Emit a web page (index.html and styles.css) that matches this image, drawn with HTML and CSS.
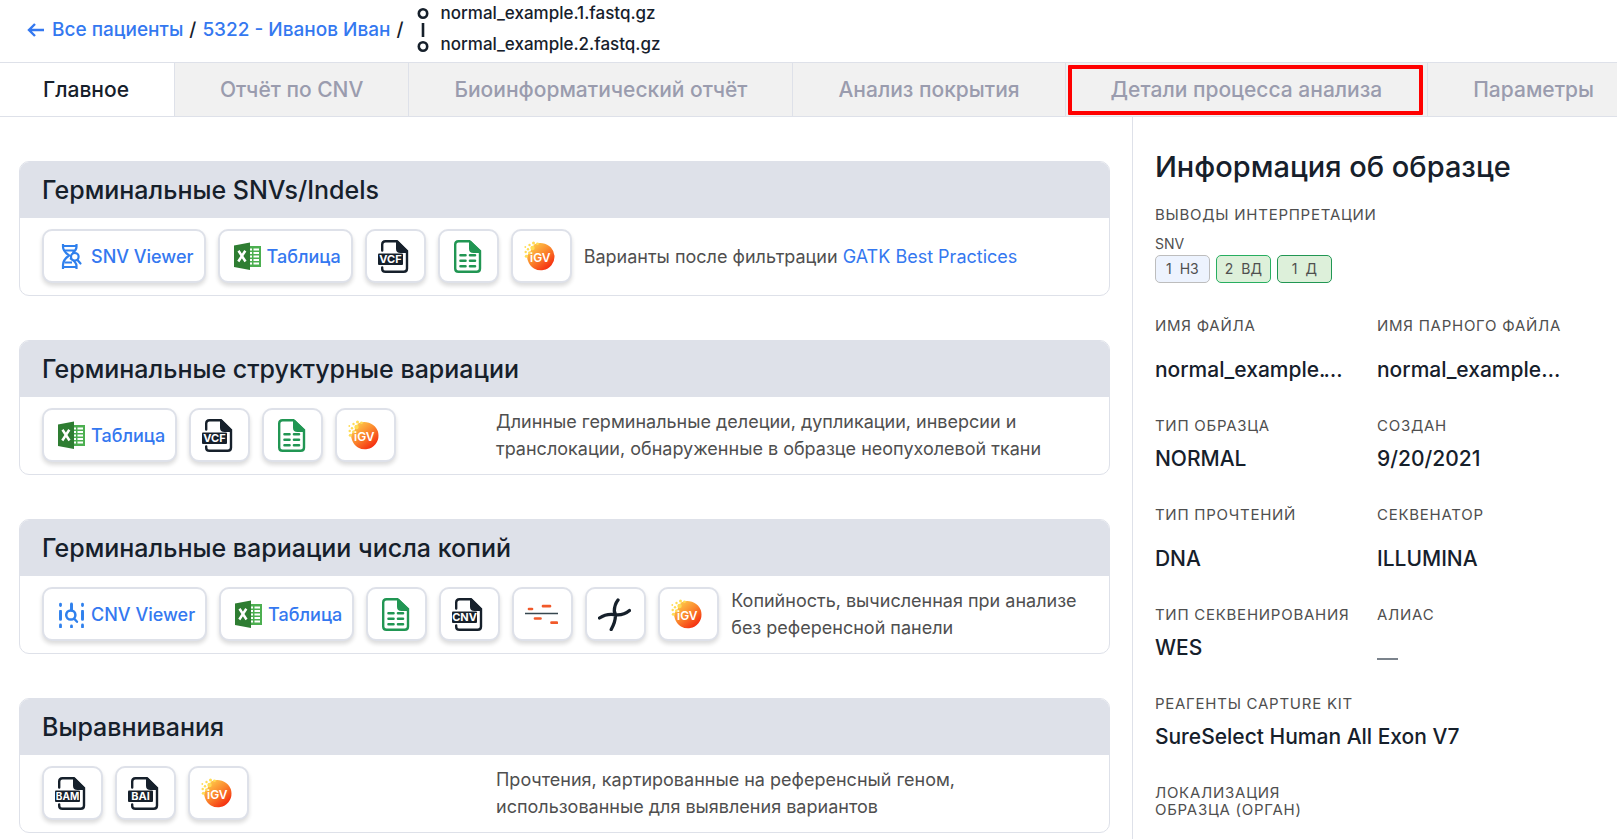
FILE: index.html
```html
<!DOCTYPE html>
<html lang="ru">
<head>
<meta charset="utf-8">
<meta name="viewport" content="width=device-width, initial-scale=1">
<title>Информация об образце</title>
<link rel="stylesheet" href="styles.css">
</head>
<body>
<svg class="sprite" aria-hidden="true">
  <defs>
    <linearGradient id="igv-fill" x1="0" y1="0" x2="0.8" y2="1">
      <stop offset="0" stop-color="#ffdf55"/>
      <stop offset="0.5" stop-color="#fb8a2e"/>
      <stop offset="1" stop-color="#f4220c"/>
    </linearGradient>
    <symbol id="i-doc" viewBox="0 0 33 33">
      <path d="M4.2 10.5V4.5Q4.2 1.2 7.5 1.2H19L29 11V28.5Q29 31.8 25.7 31.8H7.5Q4.2 31.8 4.2 29V27.5" fill="none" stroke="#16202b" stroke-width="2.4" stroke-linecap="round"/>
      <path d="M18 1H20L29.5 10.500V13H22.500Q18 13 18 9Z" fill="#16202b"/>
      <rect x="0" y="13.500" width="25" height="11.500" rx="1" fill="#16202b"/>
    </symbol>
    <symbol id="i-sheet" viewBox="0 0 33 33">
      <path d="M18.500 1.200H7.500Q4.200 1.200 4.200 4.500V28.500Q4.200 31.800 7.500 31.800H25.700Q29 31.800 29 28.500V11Z" fill="none" stroke="#219653" stroke-width="2.400"/>
      <path d="M18 1H20L30 11V13H22.500Q18 13 18 9Z" fill="#219653"/>
      <path d="M9.500 15.300H14.500M19 15.300H24M9.500 20.800H14.500M19 20.800H24M9.500 26.200H14.500M19 26.200H24" stroke="#219653" stroke-width="2.600" stroke-linecap="round"/>
    </symbol>
    <symbol id="i-igv" viewBox="0 0 33 33">
      <path d="M10 4.500Q14 2.600 18.500 3.200A13.600 13.600 0 1 1 4 21Q2.800 18 3.200 15.500L6 12Z" fill="url(#igv-fill)"/>
      <g fill="#ffdc55">
        <circle cx="5.500" cy="5" r="1.200"/><circle cx="9.500" cy="3" r="1.500"/><circle cx="1.300" cy="7" r="0.900"/>
        <circle cx="8.500" cy="8" r="2.200"/><circle cx="4" cy="9.300" r="1.200"/><circle cx="13.500" cy="3.800" r="1.300"/>
        <circle cx="5.500" cy="12.800" r="1.500"/><circle cx="1.700" cy="12" r="1.200"/><circle cx="2.300" cy="16.200" r="1.500"/>
      </g>
      <text class="igv-word" x="6" y="21.500">iGV</text>
    </symbol>
    <symbol id="i-excel" viewBox="0 0 28 28">
      <rect x="14" y="4" width="13" height="21" fill="#4caf50"/>
      <path d="M14 7.500H18M19.500 7.500H25M14 11H18M19.500 11H25M14 14.500H18M19.500 14.500H25M14 18H18M19.500 18H25M14 21.500H18M19.500 21.500H25" stroke="#fff" stroke-width="1.900"/>
      <path d="M0 3.500L16 0.500V28L0 25Z" fill="#2e7d32"/>
      <path d="M4.500 8.800L11.500 19.500M11.300 8.800L4.300 19.500" stroke="#fff" stroke-width="2.500"/>
    </symbol>
    <symbol id="i-snv" viewBox="0 0 28 28">
      <g fill="none" stroke="#2f80ed" stroke-width="2.200">
        <path d="M5 2V5Q5 9 11 13.500Q5 18 5 23V27M18.500 2V5Q18.500 8 14.500 11M12 16Q18.500 20 18.500 24V27"/>
        <path d="M5 4H18.500M6.500 8.500H17M6.500 20.500H14M5 25H18.500"/>
        <circle cx="16.800" cy="14.800" r="3.800" fill="#fff"/>
        <path d="M19.500 18L22.500 21.500" stroke-linecap="round"/>
      </g>
    </symbol>
    <symbol id="i-cnv" viewBox="0 0 28 28">
      <g fill="none" stroke="#2f80ed" stroke-width="2.800" stroke-linecap="round">
        <path d="M2.500 4.200V5.500M2.500 12V19M2.500 25V27M24.500 4.200V5.500M24.500 12V19M24.500 25V27M13.500 4V10M13.500 26V27" />
        <path d="M2.500 10V20.500M24.500 10V20.500M13.500 4V10" stroke-width="2.400" stroke-linecap="butt"/>
        <circle cx="12.800" cy="15" r="4.600" stroke-width="2.500"/>
        <path d="M16.500 19L19 21.800" stroke-width="2.400"/>
      </g>
    </symbol>
    <symbol id="i-segments" viewBox="0 0 33 33">
      <path d="M0 15.500H33" stroke="#37474f" stroke-width="1.400"/>
      <path d="M4 11H7M18 8.200H25M10 20.500H15.500M26.500 24.700H32" stroke="#f1592a" stroke-width="2.700" stroke-linecap="round"/>
    </symbol>
    <symbol id="i-chromosome" viewBox="0 0 33 33">
      <path d="M20 2Q16.500 6.500 16.300 13Q19.500 20 13.200 31.500M1.500 20Q8 15.500 16 16.500Q25 18 31.500 12.500M16.300 13L17.500 18" fill="none" stroke="#16202b" stroke-width="3.300" stroke-linecap="round" stroke-linejoin="round"/>
    </symbol>
  </defs>
</svg>

<header class="topbar">
  <nav class="crumbs" aria-label="Навигация">
    <a class="crumb-link back" href="#">
      <svg class="arrow" viewBox="0 0 18 16" aria-hidden="true"><path d="M8 2L2 8L8 14M2.500 8H17" fill="none" stroke="currentColor" stroke-width="2.400"/></svg>
      Все пациенты</a>
    <span>/</span>
    <a class="crumb-link" href="#">5322 - Иванов Иван</a>
    <span>/</span>
  </nav>
  <div class="pair">
    <svg class="pair-mark" viewBox="0 0 12 44" aria-hidden="true"><g fill="none" stroke="#16202b" stroke-width="2.600"><ellipse cx="6" cy="5.500" rx="4.200" ry="4.200"/><path d="M6 15V29"/><ellipse cx="6" cy="38.500" rx="4.200" ry="4.200"/></g></svg>
    <div class="pair-names"><span>normal_example.1.fastq.gz</span><span>normal_example.2.fastq.gz</span></div>
  </div>
</header>

<nav class="tabs" aria-label="Разделы">
  <a class="tab tab-active" href="#">Главное</a>
  <a class="tab" href="#">Отчёт по CNV</a>
  <a class="tab" href="#">Биоинформатический отчёт</a>
  <a class="tab" href="#">Анализ покрытия</a>
  <a class="tab tab-marked" href="#">Детали процесса анализа</a>
  <a class="tab" href="#">Параметры</a>
</nav>

<div class="layout">
  <main class="cards">
    <section class="card">
      <h2 class="card-title">Герминальные SNVs/Indels</h2>
      <div class="card-body">
        <div class="actions">
          <button class="btn"><svg class="icon-s" aria-hidden="true"><use href="#i-snv"/></svg>SNV Viewer</button>
          <button class="btn"><svg class="icon-s" aria-hidden="true"><use href="#i-excel"/></svg>Таблица</button>
          <button class="btn btn-icon" aria-label="VCF"><svg class="icon-l" viewBox="0 0 33 33"><use href="#i-doc"/><text class="doc-word" x="12.500" y="23">VCF</text></svg></button>
          <button class="btn btn-icon" aria-label="Google Sheets"><svg class="icon-l"><use href="#i-sheet"/></svg></button>
          <button class="btn btn-icon" aria-label="IGV"><svg class="icon-l"><use href="#i-igv"/></svg></button>
        </div>
        <p class="note">Варианты после фильтрации <a class="note-link" href="#">GATK Best Practices</a></p>
      </div>
    </section>

    <section class="card">
      <h2 class="card-title">Герминальные структурные вариации</h2>
      <div class="card-body">
        <div class="actions">
          <button class="btn"><svg class="icon-s" aria-hidden="true"><use href="#i-excel"/></svg>Таблица</button>
          <button class="btn btn-icon" aria-label="VCF"><svg class="icon-l" viewBox="0 0 33 33"><use href="#i-doc"/><text class="doc-word" x="12.500" y="23">VCF</text></svg></button>
          <button class="btn btn-icon" aria-label="Google Sheets"><svg class="icon-l"><use href="#i-sheet"/></svg></button>
          <button class="btn btn-icon" aria-label="IGV"><svg class="icon-l"><use href="#i-igv"/></svg></button>
        </div>
        <p class="note">Длинные герминальные делеции, дупликации, инверсии и транслокации, обнаруженные в образце неопухолевой ткани</p>
      </div>
    </section>

    <section class="card">
      <h2 class="card-title">Герминальные вариации числа копий</h2>
      <div class="card-body">
        <div class="actions">
          <button class="btn"><svg class="icon-s" aria-hidden="true"><use href="#i-cnv"/></svg>CNV Viewer</button>
          <button class="btn"><svg class="icon-s" aria-hidden="true"><use href="#i-excel"/></svg>Таблица</button>
          <button class="btn btn-icon" aria-label="Google Sheets"><svg class="icon-l"><use href="#i-sheet"/></svg></button>
          <button class="btn btn-icon" aria-label="CNV"><svg class="icon-l" viewBox="0 0 33 33"><use href="#i-doc"/><text class="doc-word" x="12.500" y="23">CNV</text></svg></button>
          <button class="btn btn-icon" aria-label="Сегменты"><svg class="icon-l"><use href="#i-segments"/></svg></button>
          <button class="btn btn-icon" aria-label="Хромосомы"><svg class="icon-l"><use href="#i-chromosome"/></svg></button>
          <button class="btn btn-icon" aria-label="IGV"><svg class="icon-l"><use href="#i-igv"/></svg></button>
        </div>
        <p class="note">Копийность, вычисленная при анализе без референсной панели</p>
      </div>
    </section>

    <section class="card">
      <h2 class="card-title">Выравнивания</h2>
      <div class="card-body">
        <div class="actions">
          <button class="btn btn-icon" aria-label="BAM"><svg class="icon-l" viewBox="0 0 33 33"><use href="#i-doc"/><text class="doc-word doc-word-wide" x="12.500" y="22.800">BAM</text></svg></button>
          <button class="btn btn-icon" aria-label="BAI"><svg class="icon-l" viewBox="0 0 33 33"><use href="#i-doc"/><text class="doc-word" x="12.500" y="23">BAI</text></svg></button>
          <button class="btn btn-icon" aria-label="IGV"><svg class="icon-l"><use href="#i-igv"/></svg></button>
        </div>
        <p class="note">Прочтения, картированные на референсный геном, использованные для выявления вариантов</p>
      </div>
    </section>
  </main>

  <aside class="info">
    <h1 class="info-title">Информация об образце</h1>
    <div class="label">Выводы интерпретации</div>
    <div class="kind">SNV</div>
    <div class="badges">
      <span class="badge badge-neutral"><span>1</span><span>НЗ</span></span>
      <span class="badge badge-likely"><span>2</span><span>ВД</span></span>
      <span class="badge badge-benign"><span>1</span><span>Д</span></span>
    </div>
    <dl class="facts">
      <div class="fact fact-tall"><dt class="label">Имя файла</dt><dd class="value">normal_example.1.fastq.gz</dd></div>
      <div class="fact fact-tall"><dt class="label">Имя парного файла</dt><dd class="value value-short">normal_example.2.fastq.gz</dd></div>
      <div class="fact"><dt class="label">Тип образца</dt><dd class="value">NORMAL</dd></div>
      <div class="fact"><dt class="label">Создан</dt><dd class="value">9/20/2021</dd></div>
      <div class="fact fact-tall"><dt class="label">Тип прочтений</dt><dd class="value">DNA</dd></div>
      <div class="fact fact-tall"><dt class="label">Секвенатор</dt><dd class="value">ILLUMINA</dd></div>
      <div class="fact"><dt class="label">Тип секвенирования</dt><dd class="value">WES</dd></div>
      <div class="fact"><dt class="label">Алиас</dt><dd class="value"><span class="blank"></span></dd></div>
      <div class="fact fact-wide"><dt class="label">Реагенты capture kit</dt><dd class="value">SureSelect Human All Exon V7</dd></div>
      <div class="fact"><dt class="label">Локализация образца (орган)</dt></div>
    </dl>
  </aside>
</div>
</body>
</html>
```
FILE: styles.css
```css
* { box-sizing: border-box; }

html, body { height: 100%; }

body {
  margin: 0;
  display: flex;
  flex-direction: column;
  overflow: hidden;
  background: #fff;
  color: #16202b;
  font-family: Inter, "Liberation Sans", sans-serif;
  font-size: 18px;
  line-height: 27px;
}

.sprite { position: absolute; width: 0; height: 0; }

a { text-decoration: none; color: inherit; }

.topbar {
  flex: none;
  display: flex;
  align-items: center;
  gap: 13px;
  height: 62px;
  padding: 0 27px 3px;
}

.crumbs {
  display: flex;
  align-items: center;
  gap: 6px;
  font-size: 19px;
  font-weight: 550;
}

.crumb-link { color: #3478f0; }
.back { display: flex; align-items: center; gap: 7px; }
.arrow { width: 18px; height: 16px; }

.pair { display: flex; align-items: center; gap: 12px; }
.pair-mark { width: 12px; height: 44px; }

.pair-names {
  display: flex;
  flex-direction: column;
  gap: 4px;
  padding-bottom: 2px;
  font-size: 17px;
  font-weight: 500;
}

.tabs {
  flex: none;
  display: flex;
  overflow: hidden;
  border-top: 1px solid #dee1e9;
  border-bottom: 1px solid #dee1e9;
  background: #f1f1f1;
}

.tab {
  flex: none;
  position: relative;
  padding: 13px 45px;
  border-right: 1px solid #dee1e9;
  color: #9a9cae;
  font-size: 21px;
  font-weight: 550;
}

.tab-active {
  padding-left: 43px;
  background: #fff;
  color: #16202b;
}

.tab-marked::after {
  content: "";
  position: absolute;
  inset: 2px 4px 1px 2px;
  border: 4px solid #f00;
  border-radius: 1px;
}

.layout { flex: 1; display: flex; min-height: 0; }

.cards {
  flex: 1;
  display: flex;
  flex-direction: column;
  gap: 44px;
  min-width: 0;
  padding: 44px 22px 0 19px;
}

.card {
  border: 1px solid #dee1e9;
  border-radius: 10px;
  overflow: hidden;
  flex: none;
}

.card-title {
  margin: 0;
  padding: 12px 22px;
  background: #dee1e9;
  font-size: 25px;
  line-height: 32px;
  font-weight: 550;
}

.card-body {
  display: flex;
  align-items: center;
  gap: 12px;
  padding: 11px 22px 12px;
}

.actions { display: flex; gap: 12px; flex: none; min-width: 42.3%; }

.btn {
  display: flex;
  align-items: center;
  gap: 5px;
  height: 54px;
  padding: 0 10px 0 14px;
  border: 2px solid #dee1e9;
  border-radius: 10px;
  background: #fff;
  box-shadow: 0 3px 4px rgba(0, 0, 0, 0.14);
  color: #3478f0;
  font: 500 18px/27px Inter, "Liberation Sans", sans-serif;
}

.btn-icon { padding: 0 13px 0 11px; }
.icon-s { width: 28px; height: 28px; }
.icon-l { width: 33px; height: 33px; }

.doc-word {
  fill: #fff;
  font: 700 11px Inter, sans-serif;
  text-anchor: middle;
}

.doc-word-wide { font-size: 10px; }

.igv-word { fill: #fff; font: 600 12px Inter, sans-serif; }

.note { margin: 0; color: #4f4f4f; }
.note-link { color: #3478f0; }

.info {
  flex: none;
  width: 30%;
  padding: 32px 18px 0 22px;
  border-left: 1px solid #dee1e9;
}

.info-title {
  margin: 0 0 21px;
  font-size: 29px;
  line-height: 36px;
  font-weight: 550;
}

.label {
  color: #4f4f4f;
  font-size: 15px;
  line-height: 17px;
  letter-spacing: 0.05em;
  text-transform: uppercase;
}

.kind {
  margin-top: 9px;
  color: #4f4f4f;
  font-size: 14px;
  line-height: 23px;
}

.badges { display: flex; gap: 6px; }

.badge {
  display: flex;
  justify-content: center;
  gap: 8px;
  width: 55px;
  height: 28px;
  border: 1px solid;
  border-radius: 5px;
  color: #4f4f4f;
  font-size: 14px;
  line-height: 25px;
}

.badge-neutral { background: #edf3fe; border-color: #bdbdbd; }
.badge-likely { background: #ddf0da; border-color: #27ae60; }
.badge-benign { background: #ddf0da; border-color: #219653; }

.facts {
  display: grid;
  grid-template-columns: 1fr 1fr;
  row-gap: 33px;
  margin: 34px 0 0;
}

.fact { min-width: 0; padding-right: 20px; }
.fact-wide { grid-column: 1 / -1; }

.value {
  margin: 11px 13px 0 0;
  overflow: hidden;
  font-size: 21px;
  line-height: 28px;
  font-weight: 550;
  text-overflow: ellipsis;
  white-space: nowrap;
}

.fact-tall .value { margin-top: 22px; }
.fact-tall .value-short { margin-right: 16px; }

.blank {
  display: inline-block;
  width: 21px;
  height: 2px;
  background: #7b838c;
  vertical-align: -5px;
}
```
